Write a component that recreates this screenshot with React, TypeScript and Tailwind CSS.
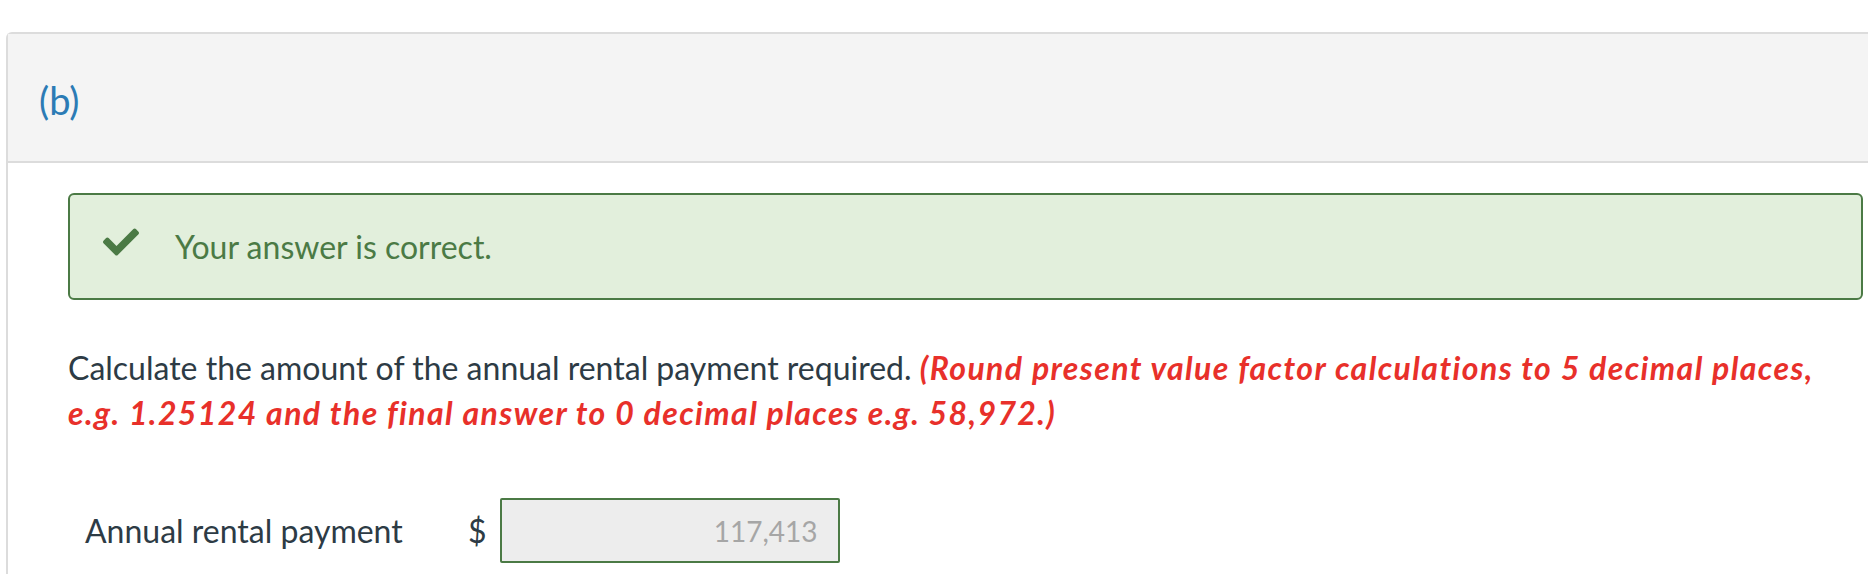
import React from 'react';
import { FaCheck } from 'react-icons/fa';

const App = () => {
  return (
    <div className="h-[574px] w-full overflow-hidden bg-white pt-[32px] pl-[6px] font-['Lato','Liberation_Sans',sans-serif]">
      <div className="h-full rounded-tl-[6px] border-l-2 border-t-2 border-[#dcdcdc]">
        {/* part header */}
        <div className="flex h-[129px] items-center border-b-2 border-[#dcdcdc] bg-[#f4f4f4] pl-[31px] pt-[4px]">
          <span className="text-[38px] leading-none text-[#2b7bb5]">(b)</span>
        </div>

        <div className="pl-[60px] pr-[5px] pt-[30px]">
          {/* result banner */}
          <div className="flex h-[107px] items-center rounded-[6px] border-2 border-[#4b7a45] bg-[#e2efdc] pl-[33px]">
            <FaCheck className="-mt-[10px] h-[36px] w-[36px] text-[#4b7a45]" />
            <span className="ml-[36px] text-[32px] text-[#4b7a45]">Your answer is correct.</span>
          </div>

          {/* question */}
          <p className="mt-[45px] pr-[30px] text-[32px] leading-[45px] text-[#2d3b45]">
            Calculate the amount of the annual rental payment required.{' '}
            <span className="font-bold italic tracking-[1.4px] text-[#e8302a]">
              (Round present value factor calculations to 5 decimal places, e.g. 1.25124 and the final answer to 0 decimal places e.g. 58,972.)
            </span>
          </p>

          {/* answer row */}
          <div className="mt-[63px] flex items-center pl-[17px]">
            <span className="w-[383px] text-[32px] text-[#2d3b45]">Annual rental payment</span>
            <span className="text-[32px] text-[#2d3b45]">$</span>
            <div className="ml-[13px] flex h-[65px] w-[340px] items-center justify-end rounded-[2px] border-2 border-[#4b7a45] bg-[#ededed] pr-[20px]">
              <span className="text-[28px] text-[#a6a6a6]">117,413</span>
            </div>
          </div>
        </div>
      </div>
    </div>
  );
};

export default App;
